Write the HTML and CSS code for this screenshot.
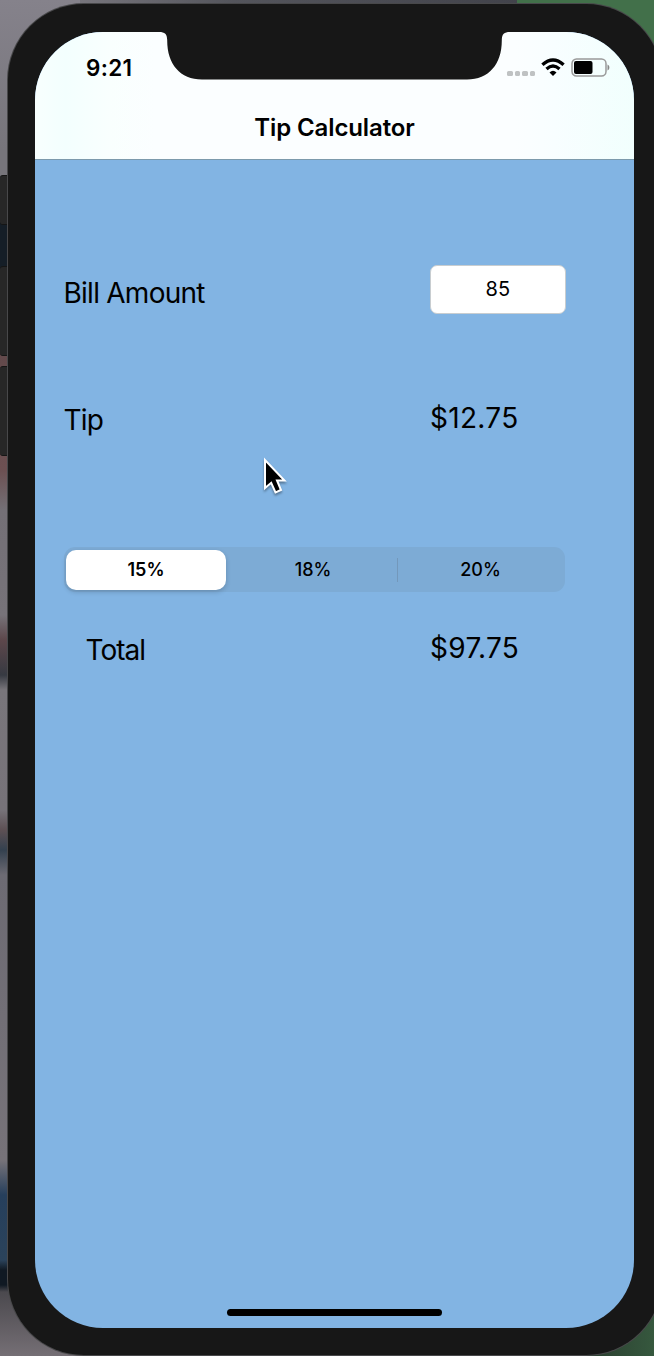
FILE: index.html
```html
<!DOCTYPE html>
<html lang="en">
<head>
<meta charset="utf-8">
<title>Tip Calculator</title>
<link rel="stylesheet" href="styles.css">
</head>
<body>
<div class="desktop">
  <div class="backdrop"></div>
  <div class="side-buttons"><i class="mute"></i><i class="volume"></i><i class="volume"></i></div>
  <div class="phone">
    <div class="screen">
      <header class="header">
        <svg class="notch" width="351" height="48" viewBox="0 0 351 48"><path fill="#171717" d="M0 0C6 0 8 2 8.200 8C8 32 21 47.500 43 47.500H308C330 47.500 343 32 342.800 8C343 2 345 0 351 0Z"/></svg>
        <div class="status">
          <span class="time">9:21</span>
          <div class="indicators">
            <div class="cell"><i></i><i></i><i></i><i></i></div>
            <svg class="wifi" width="24" height="19" viewBox="0 0 24 19"><path d="M12 18L8.500 14.400Q12 11.300 15.500 14.400Z"/><path fill="none" stroke="#000" stroke-width="3.300" d="M1.400 6.800Q12-2.800 22.600 6.800M5.500 11Q12 5 18.500 11"/></svg>
            <svg class="battery" width="39" height="19" viewBox="0 0 39 19"><rect x="1" y="1" width="34" height="17" rx="4.500" fill="none" stroke="#999" stroke-width="1.500"/><rect x="3" y="3" width="18.500" height="13" rx="2"/><path fill="#888" d="M36.500 6.500C39 7.500 39 11.500 36.500 12.500Z"/></svg>
          </div>
        </div>
        <h1 class="title">Tip Calculator</h1>
      </header>
      <main class="calculator">
        <div class="row bill"><label class="label" for="bill">Bill Amount</label><input class="amount-field" id="bill" value="85"></div>
        <div class="row tip"><span class="label">Tip</span><span class="amount">$12.75</span></div>
        <div class="segments">
          <span class="segment selected">15%</span><span class="segment middle">18%</span><i class="divider"></i><span class="segment">20%</span>
        </div>
        <div class="row total"><span class="label">Total</span><span class="amount">$97.75</span></div>
      </main>
      <div class="home-bar"></div>
    </div>
  </div>
  <svg class="cursor" width="28" height="40" viewBox="0 0 28 40"><path d="M2 3V31L8.200 25.800L12.500 35.500L18 33L14 23.500H21.500Z" fill="#000" stroke="#fff" stroke-width="2"/></svg>
</div>
</body>
</html>
```
FILE: styles.css
```css
* { box-sizing: border-box; }
body { margin: 0; font-family: Inter, "Liberation Sans", sans-serif; color: #000; }
.desktop {
  position: relative; width: 654px; height: 1356px; overflow: hidden;
  padding: 4px 0 0 8px;
  background: linear-gradient(90deg, #77757c 0 517px, #42704a 517px);
}
.backdrop {
  position: absolute; inset: 0 auto 0 0; width: 517px;
  background: linear-gradient(180deg, #85828b 0, #77757b 150px, #77757b 175px, #151e27 180px, #151e27 267px, #62494b 350px, #6c5052 470px, #747076 510px, #777379 615px, #5d474b 640px, #373a42 675px, #79767b 690px, #777379 810px, #5d5054 830px, #34414f 850px, #6d6b73 875px, #777379 1160px, #263f5c 1195px, #2b435b 1260px, #101923 1270px, #101923 1285px, #4b494e 1292px, #756f75 1356px);
}
.desktop::before {
  content: ""; position: absolute; z-index: 1; top: 0; left: 80px; width: 437px; height: 7px;
  background: linear-gradient(90deg, #77757c, #54555c 35%, #42434b);
}
.desktop::after {
  content: ""; position: absolute; right: 0; bottom: 0; width: 90px; height: 150px;
  background: linear-gradient(90deg, #26352a, #36583e);
}
.side-buttons { position: absolute; left: 0; top: 175px; display: flex; flex-direction: column; gap: 10px; }
.side-buttons i { width: 8px; background: #272727; border: solid #151515; border-width: 1px 0; border-radius: 3px 0 0 3px; }
.side-buttons .mute { height: 50px; margin-bottom: 31px; }
.side-buttons .volume { height: 90px; }
.phone {
  position: relative; z-index: 2; width: 654px; height: 1351px; padding: 28px 27px;
  border-radius: 76px; background: #171717; box-shadow: 0 0 0 1px #48484a;
}
.screen {
  display: flex; flex-direction: column; width: 599px; height: 1296px;
  overflow: hidden; border-radius: 68px; background: #82b4e3;
}
.header {
  position: relative; height: 128px; flex: none; border-bottom: 1px solid #7c9aac;
  background: linear-gradient(90deg, #f8fffe, #f3fffe 30px, #f9fffe 75px, #fbfeff 120px 480px, #f8feff 520px, #f1fffd);
}
.notch { position: absolute; top: 0; left: 124px; }
.status { display: flex; justify-content: space-between; height: 72px; padding: 0 24px 0 51px; }
.time { padding-top: 22px; font-size: 22.500px; line-height: 28px; font-weight: 600; letter-spacing: .3px; }
.indicators { display: flex; align-items: flex-start; padding-top: 26px; }
.cell { display: flex; gap: 2px; margin: 13px 6px 0 0; }
.cell i { width: 5.500px; height: 5px; border-radius: 1.500px; background: #bfc2c3; }
.wifi { margin-right: 6px; }
.title { margin: 8px 0 0; text-align: center; font-size: 24px; line-height: 32px; font-weight: 600; letter-spacing: -.12px; }
.calculator { padding: 105px 68px 0 29px; }
.row { display: grid; grid-template-columns: 366px 136px; height: 50px; font-size: 28px; line-height: 34px; }
.label { padding-top: 11px; letter-spacing: -.75px; text-indent: -.5px; }
.amount { padding-top: 9px; letter-spacing: .3px; }
.amount-field {
  width: 136px; height: 49px; padding: 0 0 2px; border: 1px solid #c8cdd0; border-radius: 7px;
  background: #fff; text-align: center; font: 20px/30px Inter, sans-serif; letter-spacing: .3px; outline: 0;
}
.tip { margin-top: 77px; }
.segments {
  display: grid; grid-template-columns: 160px 171px 1px 1fr; align-items: center;
  width: 501px; height: 45px; margin-top: 105px; padding: 2px; border-radius: 11px;
  background: #7dabd5; font-size: 18px; font-weight: 500; text-align: center; letter-spacing: 0;
}
.selected { height: 40px; line-height: 40px; border-radius: 10px; background: #fff; font-weight: 600; box-shadow: 0 2px 5px rgba(0, 0, 0, .18); }
.middle { padding-left: 3px; }
.divider { height: 24px; background: #7398bb; }
.total { margin-top: 30px; }
.total .label { padding-left: 22px; letter-spacing: -1px; }
.home-bar { width: 215px; height: 7px; margin: auto auto 12px; border-radius: 4px; background: #000; }
.cursor { position: absolute; z-index: 3; left: 263px; top: 457px; filter: drop-shadow(0 2px 1px rgba(0, 0, 0, .35)); }
```
